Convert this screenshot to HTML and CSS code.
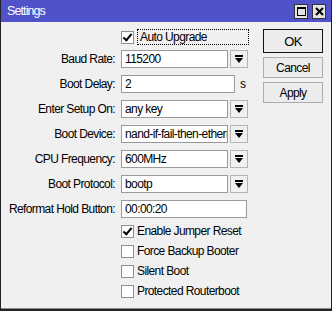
FILE: index.html
```html
<!DOCTYPE html>
<html lang="en">
<head>
    <meta charset="UTF-8">
    <title>Settings</title>
    <link rel="stylesheet" href="styles.css">
</head>
<body>
    <div class="window">
        <div class="titlebar">
            <span class="title">Settings</span>
            <div class="title-btns">
                <span class="tbtn">
                    <svg width="9" height="9" viewBox="0 0 9 9"><rect x="0.5" y="0.5" width="8" height="8" fill="none" stroke="#000"/><rect x="0" y="0" width="9" height="2" fill="#000"/></svg>
                </span>
                <span class="tbtn">
                    <svg width="9" height="9" viewBox="0 0 9 9"><path d="M1 1 L8 8 M8 1 L1 8" stroke="#000" stroke-width="2"/></svg>
                </span>
            </div>
        </div>

        <div class="content">
            <div class="form">
                <div class="check-row top">
                    <span class="box checked"></span>
                    <span class="focus">Auto Upgrade</span>
                </div>

                <div class="row">
                    <label>Baud Rate:</label>
                    <div class="field-wrap">
                        <div class="field">115200</div>
                        <span class="drop"></span>
                    </div>
                </div>
                <div class="row">
                    <label>Boot Delay:</label>
                    <div class="field-wrap">
                        <div class="field short">2</div>
                        <span class="unit">s</span>
                    </div>
                </div>
                <div class="row">
                    <label>Enter Setup On:</label>
                    <div class="field-wrap">
                        <div class="field">any key</div>
                        <span class="drop"></span>
                    </div>
                </div>
                <div class="row">
                    <label>Boot Device:</label>
                    <div class="field-wrap">
                        <div class="field">nand-if-fail-then-etherm</div>
                        <span class="drop"></span>
                    </div>
                </div>
                <div class="row">
                    <label>CPU Frequency:</label>
                    <div class="field-wrap">
                        <div class="field">600MHz</div>
                        <span class="drop"></span>
                    </div>
                </div>
                <div class="row">
                    <label>Boot Protocol:</label>
                    <div class="field-wrap">
                        <div class="field">bootp</div>
                        <span class="drop"></span>
                    </div>
                </div>
                <div class="row last">
                    <label>Reformat Hold Button:</label>
                    <div class="field-wrap">
                        <div class="field wide">00:00:20</div>
                    </div>
                </div>

                <div class="checks">
                    <div class="check-row"><span class="box checked"></span><span>Enable Jumper Reset</span></div>
                    <div class="check-row"><span class="box"></span><span>Force Backup Booter</span></div>
                    <div class="check-row"><span class="box"></span><span>Silent Boot</span></div>
                    <div class="check-row"><span class="box"></span><span>Protected Routerboot</span></div>
                </div>
            </div>

            <div class="buttons">
                <button class="btn default">OK</button>
                <button class="btn">Cancel</button>
                <button class="btn">Apply</button>
            </div>
        </div>
    </div>
</body>
</html>
```

FILE: styles.css
```css
* {
    box-sizing: border-box;
}

body {
    margin: 0;
    font-family: 'Liberation Sans', Arial, sans-serif;
    font-size: 12px;
    letter-spacing: -0.6px;
    color: #000;
    background: #f0f0f0;
}

.window {
    width: 332px;
    height: 311px;
    background: #f0f0f0;
    border-left: 1px solid #222;
    border-right: 1px solid #222;
    border-bottom: 2px solid #222;
    box-shadow: inset 0 -1px 0 #8a8a8a;
    overflow: hidden;
}

.titlebar {
    height: 22px;
    margin: 0 -1px;
    background: #5052c9;
    display: flex;
    align-items: center;
    justify-content: space-between;
    padding: 0 6px 0 7px;
}

.title {
    color: #fff;
    font-size: 12.5px;
    letter-spacing: -0.9px;
}

.title-btns {
    display: flex;
    gap: 4px;
}

.tbtn {
    width: 14px;
    height: 15px;
    background: #e4e4e4;
    border: 1px solid #333;
    display: flex;
    align-items: center;
    justify-content: center;
}

.content {
    display: flex;
}

.form {
    width: 248px;
    padding-top: 7px;
}

.check-row {
    display: flex;
    align-items: center;
    height: 20px;
    padding-left: 120px;
}

.check-row.top {
    height: 16px;
    margin-bottom: 5px;
}

.box {
    width: 13px;
    height: 13px;
    border: 1px solid #8f8f8f;
    background: #fff;
    margin-right: 3px;
    flex-shrink: 0;
    position: relative;
}

.box.checked::after {
    content: "";
    position: absolute;
    left: 3px;
    top: 0px;
    width: 3px;
    height: 7px;
    border: solid #000;
    border-width: 0 2px 2px 0;
    transform: rotate(40deg);
}

.focus {
    flex: 1;
    height: 16px;
    line-height: 14px;
    padding-left: 2px;
    border: 1px dotted #000;
}

.row {
    display: grid;
    grid-template-columns: 114px 127px;
    column-gap: 6px;
    height: 18px;
    margin-bottom: 7px;
    align-items: center;
}

.row.last {
    margin-bottom: 3px;
}

.row label {
    text-align: right;
    white-space: nowrap;
}

.field-wrap {
    display: flex;
    align-items: center;
    height: 18px;
}

.field {
    width: 107px;
    height: 18px;
    line-height: 16px;
    background: #fff;
    border: 1px solid #9a9a9a;
    padding-left: 3px;
    white-space: nowrap;
    overflow: hidden;
}

.field.short {
    width: 114px;
}

.field.wide {
    width: 126px;
}

.unit {
    margin-left: 5px;
}

.drop {
    width: 18px;
    height: 18px;
    margin-left: 2px;
    border: 1px solid #b4b4b4;
    background: #f0f0f0;
    position: relative;
}

.drop::before {
    content: "";
    position: absolute;
    left: 4px;
    top: 4px;
    width: 8px;
    height: 2px;
    background: #000;
}

.drop::after {
    content: "";
    position: absolute;
    left: 4px;
    top: 7px;
    border-left: 4px solid transparent;
    border-right: 4px solid transparent;
    border-top: 5px solid #000;
}

.buttons {
    display: flex;
    flex-direction: column;
    padding: 7px 0 0 14px;
    gap: 4px;
}

.btn {
    width: 60px;
    height: 21px;
    font-family: 'Liberation Sans', Arial, sans-serif;
    font-size: 12px;
    letter-spacing: -0.6px;
    color: #000;
    background: #ececec;
    border: 1px solid #adadad;
    padding: 0;
}

.btn.default {
    height: 24px;
    border-color: #111;
    font-size: 13px;
}
```
